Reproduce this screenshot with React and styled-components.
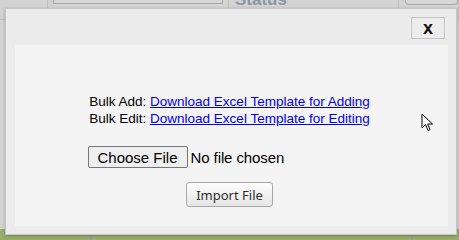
import React from "react";
import styled, { createGlobalStyle } from "styled-components";

const Global = createGlobalStyle`
  html, body { margin: 0; padding: 0; }
  body { width: 459px; height: 240px; overflow: hidden; font-family: "Liberation Sans", Arial, sans-serif; }
`;

const Page = styled.div`
  position: relative;
  width: 459px;
  height: 240px;
  overflow: hidden;
  background: #d3d3d3;
  display: flex;
  flex-direction: column;
`;

const TopBar = styled.div`
  height: 19px;
  display: flex;
  align-items: flex-start;
  border-bottom: 1px solid #c4c4c4;
`;

const Cell = styled.div`
  width: ${(p) => p.w}px;
  height: 19px;
  flex: none;
  border-right: 1px solid #bdbdbd;
  box-sizing: border-box;
  display: flex;
  align-items: flex-start;
  padding-left: ${(p) => p.pl || 0}px;
  overflow: hidden;
`;

const FieldBox = styled.div`
  width: ${(p) => p.w}px;
  height: ${(p) => p.h}px;
  border: 1px solid #a9a9a9;
  border-top: none;
  border-radius: 0 0 ${(p) => p.r || 0}px ${(p) => p.r || 0}px;
  background: #d6d6d6;
  box-sizing: border-box;
`;

const StatusLabel = styled.div`
  font-weight: bold;
  font-size: 17px;
  line-height: 17px;
  color: #8b97a3;
  margin-top: -9px;
`;

const Middle = styled.div`
  flex: 1;
`;

const Ground = styled.div`
  height: 11px;
  background: #99ae6a;
  display: flex;
`;

const GroundCell = styled.div`
  width: ${(p) => p.w}px;
  flex: none;
  border-right: 2px solid #9a9a9a;
  box-sizing: border-box;
`;

const Modal = styled.div`
  position: absolute;
  left: 5px;
  top: 8px;
  width: 452px;
  height: 227px;
  box-sizing: border-box;
  background: #ececec;
  border: 1px solid #c6c6c6;
  box-shadow: 0 1px 3px rgba(0, 0, 0, 0.25);
  display: flex;
  flex-direction: column;
  padding: 0 8px 8px 9px;
`;

const Header = styled.div`
  height: 36px;
  display: flex;
  align-items: center;
  justify-content: flex-end;
  padding-right: 3px;
`;

const CloseButton = styled.button`
  width: 34px;
  height: 22px;
  margin-top: 1px;
  box-sizing: border-box;
  border: 1px solid #c4c4c4;
  background: #ededed;
  padding: 0;
  font-family: "Liberation Sans", Arial, sans-serif;
  font-weight: bold;
  font-size: 18px;
  line-height: 18px;
  color: #111;
  display: flex;
  align-items: center;
  justify-content: center;
`;

const Body = styled.div`
  flex: 1;
  background: #f4f4f4;
  display: flex;
  flex-direction: column;
  align-items: center;
  padding: 48px 4px 0 0;
`;

const Line = styled.div`
  font-size: 13.5px;
  line-height: 17px;
  color: #000;
  white-space: nowrap;
`;

const Link = styled.a`
  color: #0000ee;
  text-decoration: underline;
`;

const FileRow = styled.div`
  width: 284px;
  margin-top: 19px;
  display: flex;
  align-items: center;
  font-size: 15px;
`;

const ChooseButton = styled.button`
  height: 22px;
  box-sizing: border-box;
  padding: 0 9px;
  border: 1px solid #767676;
  border-radius: 2px;
  background: #efefef;
  font-family: "Liberation Sans", Arial, sans-serif;
  font-size: 15px;
  color: #000;
  margin-right: 3px;
`;

const FileName = styled.span`
  color: #000;
  font-size: 15px;
  letter-spacing: -0.1px;
`;

const ImportButton = styled.button`
  margin-top: 14px;
  width: 87px;
  height: 25px;
  box-sizing: border-box;
  border: 1px solid #a8a8a8;
  border-radius: 3px;
  background: linear-gradient(#fdfdfd, #e6e6e6);
  font-family: "Noto Sans", "Open Sans", sans-serif;
  font-size: 13px;
  color: #2e2e2e;
  padding: 0;
`;

const Cursor = styled.svg`
  position: absolute;
  left: 421px;
  top: 113px;
`;

export default function App() {
  return (
    <>
      <Global />
      <Page>
        <TopBar>
          <Cell w={48} />
          <Cell w={181} pl={5}>
            <FieldBox w={170} h={4} />
          </Cell>
          <Cell w={170} pl={6}>
            <StatusLabel>Status</StatusLabel>
          </Cell>
          <Cell w={60} pl={6}>
            <FieldBox w={60} h={5} r={4} />
          </Cell>
        </TopBar>
        <Middle />
        <Ground>
          <GroundCell w={92} />
          <GroundCell w={321} />
        </Ground>
        <Modal>
          <Header>
            <CloseButton aria-label="close">x</CloseButton>
          </Header>
          <Body>
            <Line>
              Bulk Add: <Link href="#">Download Excel Template for Adding</Link>
            </Line>
            <Line>
              Bulk Edit: <Link href="#">Download Excel Template for Editing</Link>
            </Line>
            <FileRow>
              <ChooseButton>Choose File</ChooseButton>
              <FileName>No file chosen</FileName>
            </FileRow>
            <ImportButton>Import File</ImportButton>
          </Body>
        </Modal>
        <Cursor width="14" height="20" viewBox="0 0 14 20">
          <path
            d="M1 1 L1 15 L4.5 11.5 L7 17.5 L9 16.6 L6.6 11 L11.5 11 Z"
            fill="#fff"
            stroke="#000"
            strokeWidth="1"
            strokeLinejoin="round"
          />
        </Cursor>
      </Page>
    </>
  );
}
